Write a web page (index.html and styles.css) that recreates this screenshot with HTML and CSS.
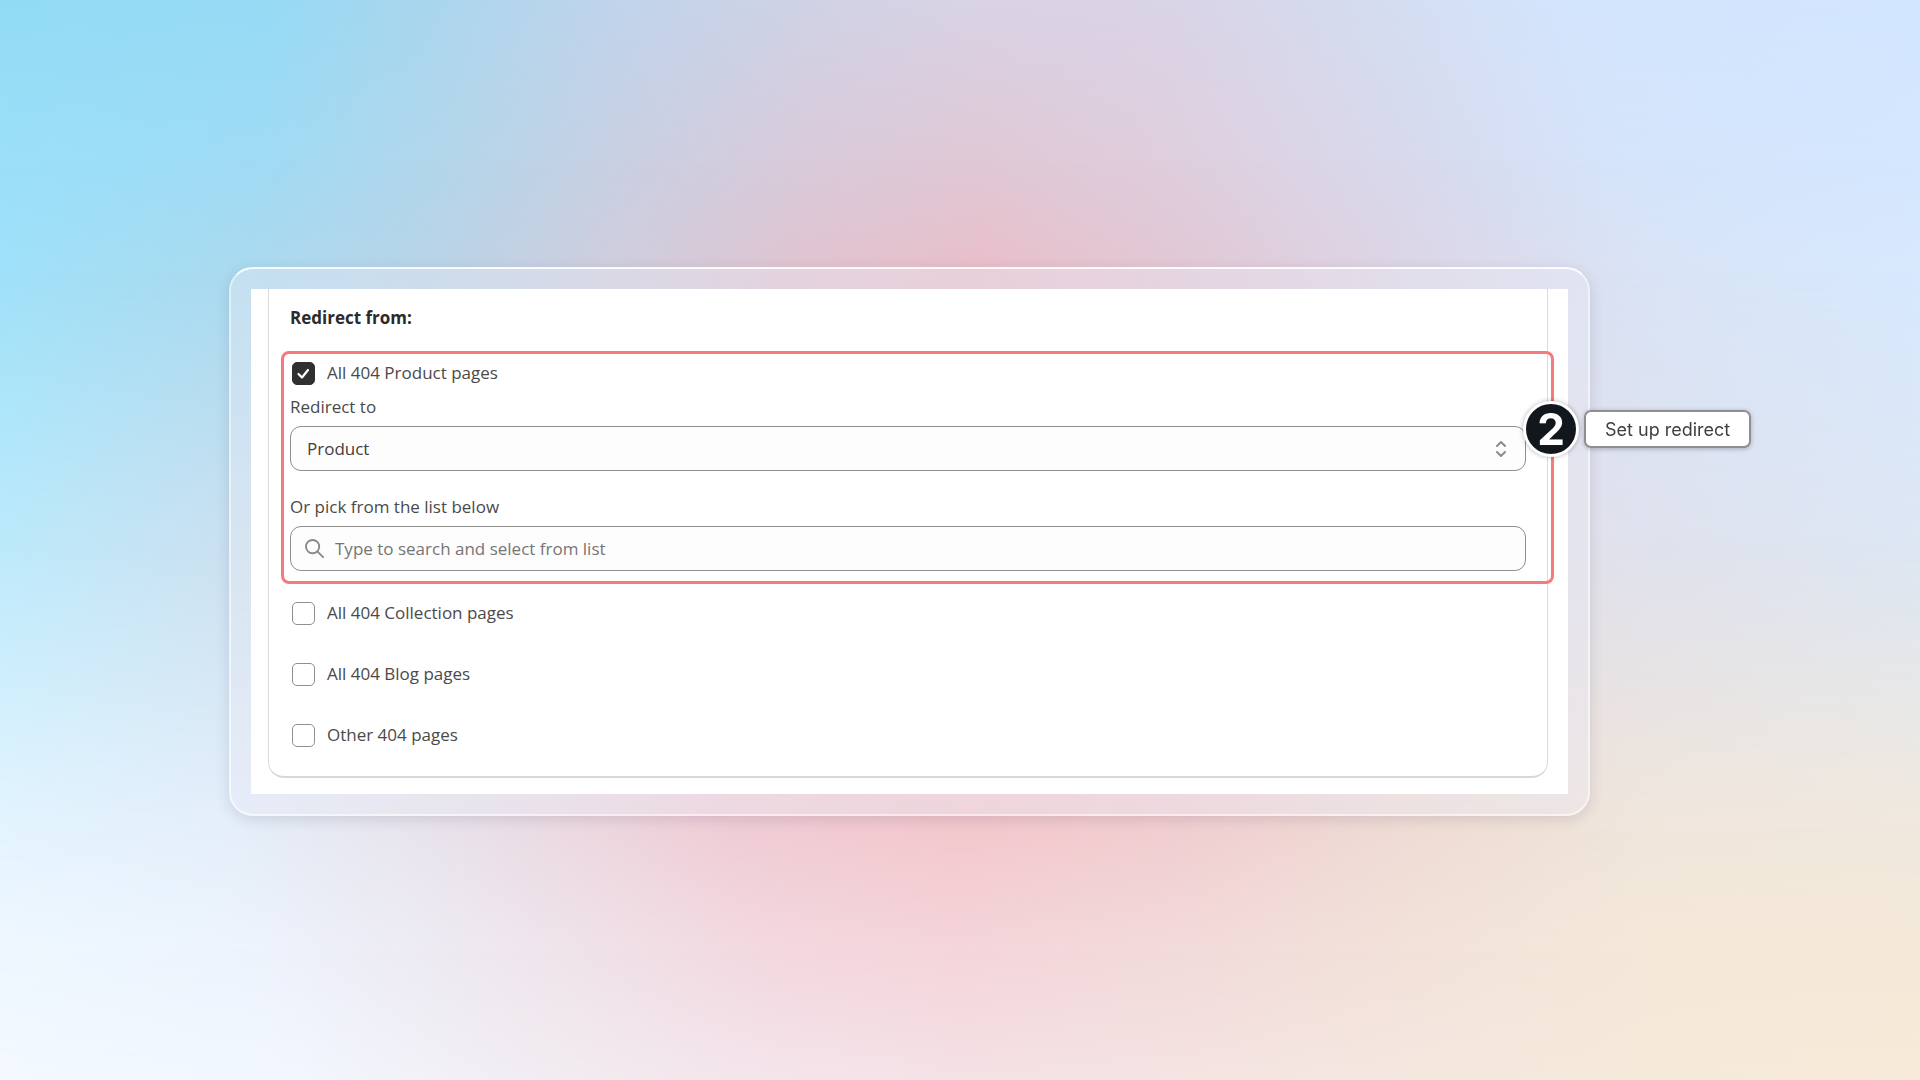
FILE: index.html
```html
<!DOCTYPE html>
<html lang="en">
<head>
<meta charset="utf-8">
<meta name="viewport" content="width=device-width, initial-scale=1">
<title>Set up redirect</title>
<link rel="stylesheet" href="styles.css">
</head>
<body>
<div class="backdrop" aria-hidden="true">
  <div class="band band-1"></div>
  <div class="band band-2"></div>
  <div class="band band-3"></div>
  <div class="band band-4"></div>
  <div class="band band-5"></div>
  <div class="band band-6"></div>
</div>
<main class="stage">
  <section class="frame">
    <div class="screen">
      <form class="card">
        <h1 class="title">Redirect from:</h1>
        <div class="highlight">
          <label class="option"><input class="tick" type="checkbox" checked><span>All 404 Product pages</span></label>
          <div class="field">
            <label class="field-label" for="target">Redirect to</label>
            <div class="control">
              <select class="box" id="target"><option>Product</option></select>
              <svg class="arrows" viewBox="0 0 12 18" aria-hidden="true"><path d="M2 6l4-4 4 4M2 12l4 4 4-4"/></svg>
            </div>
          </div>
          <div class="field field-search">
            <label class="field-label" for="search">Or pick from the list below</label>
            <div class="control">
              <svg class="lens" viewBox="0 0 20 20" aria-hidden="true"><circle cx="8" cy="8" r="7"/><path d="M13 13l6 6"/></svg>
              <input class="box box-search" id="search" type="text" placeholder="Type to search and select from list">
            </div>
          </div>
          <div class="callout">
            <span class="step">2</span>
            <span class="hint">Set up redirect</span>
          </div>
        </div>
        <div class="options">
          <label class="option"><input class="tick" type="checkbox"><span>All 404 Collection pages</span></label>
          <label class="option"><input class="tick" type="checkbox"><span>All 404 Blog pages</span></label>
          <label class="option"><input class="tick" type="checkbox"><span>Other 404 pages</span></label>
        </div>
      </form>
    </div>
  </section>
</main>
</body>
</html>
```
FILE: styles.css
```css
* { box-sizing: border-box; }

body {
  margin: 0;
  min-height: 100vh;
  font-family: "Open Sans", "Noto Sans", sans-serif;
  font-size: 17px;
  line-height: 28px;
  color: #4a4a4a;
}

/* Soft colour mesh: each band fades in over the one above it */
.backdrop {
  position: fixed;
  inset: 0;
  z-index: -1;
  background: linear-gradient(90deg, #93dcf5 0%, #97dbf5 14%, #a9d7ee 22%, #c0d4ec 32%, #d0d3e5 42%, #d9d3e5 51%, #d9d4e6 61%, #d5ddf0 71%, #d3e5fd 82%, #d2e6ff 100%);
}
.band { position: absolute; inset: 0; }
.band-1 {
  background: linear-gradient(90deg, #9adff8 0%, #a0dbf4 14%, #b0d6eb 22%, #c8d0e2 32%, #d9cada 42%, #e0c8d5 51%, #dfcedd 61%, #d8d9ec 73%, #d5e4fa 84%, #d4e7ff 100%);
  mask-image: linear-gradient(transparent 0%, #000 15%);
}
.band-2 {
  background: linear-gradient(90deg, #9fe1f9 0%, #aad9ee 13%, #b8d3e7 22%, #cfcddd 32%, #e0c3cf 42%, #e8bec9 51%, #e2c7d4 61%, #dcd5e5 73%, #d9e4f6 86%, #d8e9fe 100%);
  mask-image: linear-gradient(transparent 15%, #000 25%);
}
.band-3 {
  background: linear-gradient(90deg, #bbeafb 0%, #c8e2f2 10%, #d8d4e4 28%, #edb4bd 51%, #e2cbd5 68%, #e0e1ec 83%, #dde7f4 100%);
  mask-image: linear-gradient(transparent 25%, #000 50%);
}
.band-4 {
  background: linear-gradient(90deg, #e4f4fe 0%, #e5effa 12%, #e9e2ea 24%, #f0cdd6 38%, #f3c8cd 50%, #f1ced1 61%, #efdcd5 73%, #f0e6db 86%, #f0e8dd 100%);
  mask-image: linear-gradient(transparent 50%, #000 77%);
}
.band-5 {
  background: linear-gradient(90deg, #eef7ff 0%, #edf3fd 13%, #eee7ee 26%, #f3d8df 40%, #f4d5da 50%, #f2dadb 61%, #f2e2d9 73%, #f4e8d9 86%, #f4e8d8 100%);
  mask-image: linear-gradient(transparent 77%, #000 88%);
}
.band-6 {
  background: linear-gradient(90deg, #f4f9ff 0%, #f2f7ff 14%, #f1eef3 26%, #f3e5ec 38%, #f4e1e5 50%, #f4e3e2 61%, #f3e7df 73%, #f5e9da 86%, #f7ead8 100%);
  mask-image: linear-gradient(transparent 88%, #000 100%);
}

.stage { padding: 267px 330px 264px 229px; }

.frame {
  padding: 20px;
  border: 2px solid rgba(255, 255, 255, 0.6);
  border-top-color: rgba(255, 255, 255, 0.9);
  border-radius: 24px;
  background: rgba(234, 234, 244, 0.4);
  background-clip: padding-box;
  box-shadow: 0 4px 14px rgba(60, 50, 80, 0.14);
}
.screen {
  padding: 0 20px 16px 17px;
  background: #fff;
}
.card {
  padding: 15px 0 29px 12px;
  border: 1px solid #dcdcdc;
  border-top: 0;
  border-bottom: 2px solid #d8d8d8;
  border-radius: 0 0 16px 16px;
}
.title {
  margin: 0 0 19px;
  padding-left: 9px;
  font-size: 17px;
  line-height: 28px;
  font-weight: 700;
  color: #2b2b2b;
}

.highlight {
  position: relative;
  margin-right: -7px;
  padding: 7px 25px 10px 6px;
  border: 3px solid #f37a7e;
  border-radius: 8px;
}

.option {
  display: flex;
  align-items: center;
  gap: 12px;
  height: 24px;
  padding-left: 2px;
}
.tick {
  appearance: none;
  width: 23px;
  height: 23px;
  margin: 0;
  border: 1px solid #8f8f8f;
  border-radius: 5px;
  background: #fff;
}
.tick:checked {
  border-color: #303030;
  background: #303030 url("data:image/svg+xml,%3Csvg xmlns='http://www.w3.org/2000/svg' viewBox='0 0 21 21'%3E%3Cpath d='M5.500 11l3.500 3.500 6-7.500' fill='none' stroke='white' stroke-width='2.200' stroke-linecap='round' stroke-linejoin='round'/%3E%3C/svg%3E") center / 100% no-repeat;
}
.options {
  display: flex;
  flex-direction: column;
  gap: 37px;
  padding: 17px 0 0 9px;
}

.field { margin-top: 8px; }
.field-search { margin-top: 22px; }
.field-label {
  display: block;
  margin-bottom: 5px;
}
.control {
  display: grid;
  align-items: center;
}
.control > * { grid-area: 1 / 1; }
.box {
  width: 100%;
  height: 45px;
  padding: 0 16px;
  border: 1px solid #8f8f8f;
  border-radius: 11px;
  background: #fdfdfd;
  color: #404040;
  font: inherit;
  appearance: none;
}
.box-search { padding-left: 44px; }
.box-search::placeholder { color: #757575; opacity: 1; }
.arrows, .lens {
  z-index: 1;
  fill: none;
  stroke: #8a8a8a;
  stroke-width: 2;
  stroke-linecap: round;
  stroke-linejoin: round;
  pointer-events: none;
}
.arrows {
  justify-self: end;
  width: 12px;
  height: 18px;
  margin-right: 19px;
}
.lens {
  width: 19px;
  height: 19px;
  margin-left: 15px;
}

/* Numbered marker centred on the highlight's right edge */
.callout {
  position: absolute;
  top: 47px;
  left: calc(100% - 28px);
  display: flex;
  align-items: center;
  gap: 5px;
  font-family: Inter, sans-serif;
  white-space: nowrap;
}
.step {
  width: 56px;
  height: 56px;
  border: 3px solid #fff;
  border-radius: 50%;
  background: #12171d;
  box-shadow: 0 0 5px rgba(0, 0, 0, 0.3);
  color: #fff;
  font-size: 44px;
  line-height: 51px;
  font-weight: 700;
  text-align: center;
}
.hint {
  padding: 4px 19px 2px;
  border: 2px solid #8f8f93;
  border-radius: 7px;
  background: #fff;
  box-shadow: 0 1px 5px rgba(0, 0, 0, 0.25);
  color: #3f3f3f;
  font-size: 18px;
  line-height: 28px;
}
```
